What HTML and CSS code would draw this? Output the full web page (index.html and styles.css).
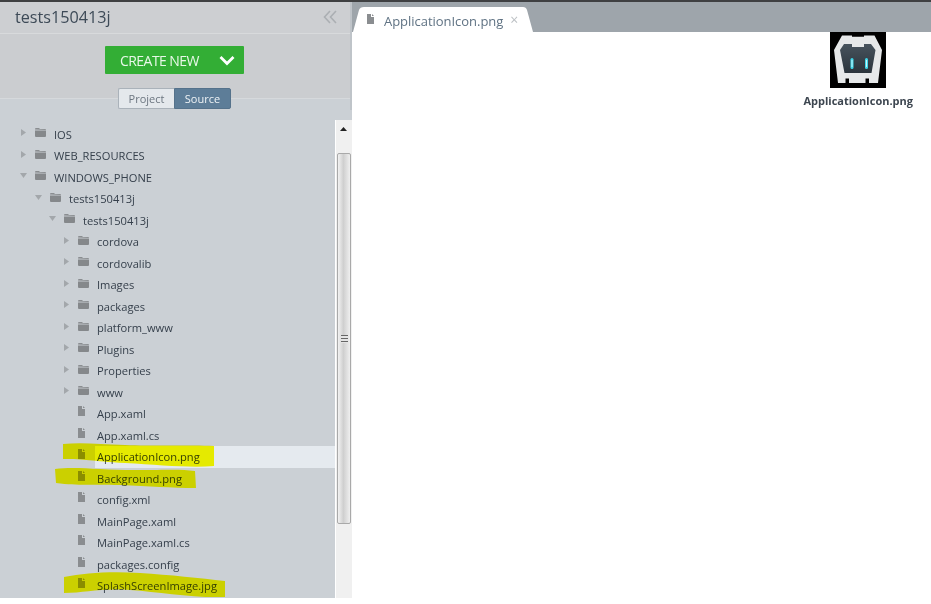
FILE: index.html
```html
<!DOCTYPE html>
<html lang="en">
<head>
<meta charset="utf-8">
<title>tests150413j</title>
<link rel="stylesheet" href="styles.css">
</head>
<body>
<svg class="defs" width="0" height="0" aria-hidden="true">
  <symbol id="folder" viewBox="0 0 11 9"><path d="M0 1.500V1q0-1 1-1h3l1 1h5q1 0 1 1z" fill="#8a8d90"/><path d="M0 2.500h11V8q0 1-1 1H1q-1 0-1-1z" fill="#85888b"/></symbol>
  <symbol id="file" viewBox="0 0 7 10"><path d="M0 0h4v3h3v7H0zM5 0l2 2H5z" fill="#8a8d90"/></symbol>
  <symbol id="closed" viewBox="0 0 5 7"><path d="M0 0l5 3.500L0 7z" fill="#a3a7ab"/></symbol>
  <symbol id="open" viewBox="0 0 7 5"><path d="M0 0h7L3.500 5z" fill="#a3a7ab"/></symbol>
  <linearGradient id="face" x1="0" y1="0" x2="0" y2="1"><stop offset="0" stop-color="#47535d"/><stop offset="1" stop-color="#2b343c"/></linearGradient>
</svg>
<div class="app">
  <div class="topline"></div>
  <div class="body">
    <aside class="sidebar">
      <header class="title-bar">
        <h1 class="title">tests150413j</h1>
        <svg class="collapse" width="14" height="14" viewBox="0 0 14 14"><path d="M7 1L1.500 7 7 13M13 1L7.500 7 13 13" fill="none" stroke="#abafb3" stroke-width="1.600"/></svg>
      </header>
      <section class="actions">
        <button class="create"><span class="create-label">CREATE NEW</span><svg class="create-chevron" width="16" height="11" viewBox="0 0 16 11"><path d="M1.500 2l6.500 6.500L14.500 2" fill="none" stroke="#fff" stroke-width="2.800"/></svg></button>
        <div class="toggle"><span class="toggle-item">Project</span><span class="toggle-item active">Source</span></div>
      </section>
      <div class="tree-wrap">
        <ul class="tree">
          <li class="row l0"><svg class="arrow"><use href="#closed"/></svg><svg class="folder"><use href="#folder"/></svg><span>IOS</span></li>
          <li class="row l0"><svg class="arrow"><use href="#closed"/></svg><svg class="folder"><use href="#folder"/></svg><span>WEB_RESOURCES</span></li>
          <li class="row l0"><svg class="arrow down"><use href="#open"/></svg><svg class="folder"><use href="#folder"/></svg><span>WINDOWS_PHONE</span></li>
          <li class="row l1"><svg class="arrow down"><use href="#open"/></svg><svg class="folder"><use href="#folder"/></svg><span>tests150413j</span></li>
          <li class="row l2"><svg class="arrow down"><use href="#open"/></svg><svg class="folder"><use href="#folder"/></svg><span>tests150413j</span></li>
          <li class="row l3"><svg class="arrow"><use href="#closed"/></svg><svg class="folder"><use href="#folder"/></svg><span>cordova</span></li>
          <li class="row l3"><svg class="arrow"><use href="#closed"/></svg><svg class="folder"><use href="#folder"/></svg><span>cordovalib</span></li>
          <li class="row l3"><svg class="arrow"><use href="#closed"/></svg><svg class="folder"><use href="#folder"/></svg><span>Images</span></li>
          <li class="row l3"><svg class="arrow"><use href="#closed"/></svg><svg class="folder"><use href="#folder"/></svg><span>packages</span></li>
          <li class="row l3"><svg class="arrow"><use href="#closed"/></svg><svg class="folder"><use href="#folder"/></svg><span>platform_www</span></li>
          <li class="row l3"><svg class="arrow"><use href="#closed"/></svg><svg class="folder"><use href="#folder"/></svg><span>Plugins</span></li>
          <li class="row l3"><svg class="arrow"><use href="#closed"/></svg><svg class="folder"><use href="#folder"/></svg><span>Properties</span></li>
          <li class="row l3"><svg class="arrow"><use href="#closed"/></svg><svg class="folder"><use href="#folder"/></svg><span>www</span></li>
          <li class="row l3 leaf"><svg class="file"><use href="#file"/></svg><span>App.xaml</span></li>
          <li class="row l3 leaf"><svg class="file"><use href="#file"/></svg><span>App.xaml.cs</span></li>
          <li class="row l3 leaf selected"><svg class="file"><use href="#file"/></svg><span>ApplicationIcon.png</span></li>
          <li class="row l3 leaf"><svg class="file"><use href="#file"/></svg><span>Background.png</span></li>
          <li class="row l3 leaf"><svg class="file"><use href="#file"/></svg><span>config.xml</span></li>
          <li class="row l3 leaf"><svg class="file"><use href="#file"/></svg><span>MainPage.xaml</span></li>
          <li class="row l3 leaf"><svg class="file"><use href="#file"/></svg><span>MainPage.xaml.cs</span></li>
          <li class="row l3 leaf"><svg class="file"><use href="#file"/></svg><span>packages.config</span></li>
          <li class="row l3 leaf"><svg class="file"><use href="#file"/></svg><span>SplashScreenImage.jpg</span></li>
        </ul>
        <div class="scrollbar">
          <div class="scroll-btn"><svg width="7" height="4" viewBox="0 0 7 4"><path d="M3.500 0L7 4H0z" fill="#222"/></svg></div>
          <div class="thumb"><div class="grip"></div></div>
          <div class="scroll-rest"></div>
        </div>
      </div>
    </aside>
    <main class="main">
      <div class="tabs">
        <div class="tab">
          <svg class="tab-file"><use href="#file"/></svg>
          <span class="tab-label">ApplicationIcon.png</span>
          <span class="tab-close">×</span>
        </div>
      </div>
      <div class="viewer">
        <figure class="preview">
          <svg class="app-icon" width="56" height="56" viewBox="0 0 56 56">
            <rect width="56" height="56" fill="#000"/>
            <path d="M12 3.500H22V4.700H34V3.500H44.500L52 18 48 51H39V46.500H35.500V51H19V46.500H15.500V51H8L4 18Z" fill="#e6e8e9"/>
            <path d="M14 12H22V15H34V12H41L45.500 18 41.500 41H14.500L10 18Z" fill="url(#face)"/>
            <rect x="20.500" y="26" width="3" height="11" rx="1.500" fill="#3fd7ea"/>
            <rect x="35" y="26" width="3" height="11" rx="1.500" fill="#3fd7ea"/>
            <rect x="21.500" y="28" width="1" height="7" fill="#c9f6fb"/>
            <rect x="36" y="28" width="1" height="7" fill="#c9f6fb"/>
          </svg>
          <figcaption class="caption">ApplicationIcon.png</figcaption>
        </figure>
      </div>
    </main>
  </div>
</div>
<svg class="marker" width="350" height="604" viewBox="0 0 350 604" aria-hidden="true">
  <path d="M63 444C80 442 100 444 125 445S190 445 214 446L214 466C190 468 160 465 125 463S85 459 63 459Z" fill="#ff0"/>
  <path d="M55 469C75 466 100 470 135 470S180 469 195 471L196 488C170 488 150 486 120 485S80 486 56 483Z" fill="#ff0"/>
  <path d="M64 577C85 573 110 571 140 573S200 578 225 581L225 597C190 598 160 592 130 590S85 593 64 593Z" fill="#ff0"/>
</svg>
</body>
</html>
```

FILE: styles.css
```css
* { box-sizing: border-box; }
html, body { margin: 0; padding: 0; background: #fff; overflow: hidden; }
body { font-family: "Open Sans", sans-serif; height: 604px; position: relative; }
.defs { position: absolute; }
.app { height: 598px; display: flex; flex-direction: column; overflow: hidden; }
.topline { height: 2px; background: #3f4042; flex: none; }
.body { flex: 1; display: flex; min-height: 0; }

.sidebar { width: 352px; flex: none; display: flex; flex-direction: column; background: #bfc4c9; min-height: 0; }
.title-bar { height: 32px; flex: none; display: flex; align-items: center; justify-content: space-between; padding: 0 13px 2px 15px; background: #cdcfd2; border-bottom: 1px solid #d8dadc; margin-right: 2px; }
.title { margin: 0; font-size: 16.200px; font-weight: 400; color: #3d4a57; }
.collapse { display: block; }
.actions { height: 76px; flex: none; display: flex; flex-direction: column; align-items: center; gap: 14px; padding-top: 12px; background: linear-gradient(#cbcdd0 64px, #d6d9dc 64px, #d6d9dc 65px, #cbd0d5 65px); margin-right: 2px; }
.create { width: 139px; height: 28px; flex: none; margin-right: 1px; padding: 0 9px 0 15px; display: flex; align-items: center; justify-content: space-between; border: 0; border-radius: 1px; background: #33ae35; color: #e8f8e8; font: 400 14px "Open Sans", sans-serif; letter-spacing: -.55px; }
.toggle { display: flex; height: 21px; flex: none; margin-right: 1px; font-size: 11px; }
.toggle-item { width: 56px; display: flex; align-items: center; justify-content: center; background: #e4e8ec; color: #6c7680; border: 1px solid #aab2ba; border-right: 0; border-radius: 2px 0 0 2px; }
.toggle-item.active { width: 57px; background: #5d7d98; color: #eef2f5; border: 1px solid #55728b; border-radius: 0 2px 2px 0; }

.tree-wrap { flex: 1; min-height: 0; display: flex; padding-top: 10px; background: linear-gradient(#cbd0d5 10px, transparent 10px); }
.tree { flex: 1; min-width: 0; margin: 0; padding: 3.500px 0 0; list-style: none; overflow: hidden; background: #cbd0d5; }
.row { height: 21.500px; display: flex; align-items: center; font-size: 11.150px; color: #36404c; white-space: nowrap; }
.arrow, .folder { flex: none; margin-bottom: 3px; }
.file { flex: none; margin-bottom: 5px; }
.arrow { width: 5px; height: 7px; }
.arrow.down { width: 7px; height: 5px; margin-left: -1px; margin-right: -1px; }
.folder { width: 11px; height: 9px; margin-left: 9px; margin-right: 8px; }
.file { width: 7px; height: 10px; margin-right: 12px; }
.l0 { padding-left: 21px; }
.l1 { padding-left: 36px; }
.l2 { padding-left: 50px; }
.l3 { padding-left: 64px; }
.leaf { padding-left: 78px; }
.selected { background: linear-gradient(90deg, transparent 95px, #e5eaef 95px); }

.scrollbar { width: 17px; flex: none; display: flex; flex-direction: column; background: #f0f0f0; border-left: 1px solid #fff; }
.scroll-btn { height: 33px; flex: none; display: flex; justify-content: center; padding-top: 7px; padding-right: 1px; background: #f0f0f0; }
.thumb { height: 371px; flex: none; margin: 0 1px; display: flex; align-items: center; justify-content: center; border: 1px solid #a9a9a9; border-radius: 2px; background: linear-gradient(90deg, #f2f2f2, #cfcfcf 45%, #d8d8d8 60%, #efefef); }
.grip { width: 7px; height: 8px; background: repeating-linear-gradient(#666 0 1px, #e4e4e4 1px 3px); }
.scroll-rest { flex: 1; background: #f0f0f0; }

.main { flex: 1; min-width: 0; display: flex; flex-direction: column; }
.tabs { height: 30px; flex: none; background: #9ea5ab; display: flex; align-items: flex-end; padding-left: 1px; }
.tab { width: 180px; height: 25px; display: flex; align-items: center; padding: 2px 0 0 14px; background: #fff; clip-path: path("M0 25L6 3Q7 0 11 0H170Q173 0 174 3L180 25Z"); }
.tab-file { width: 7px; height: 10px; margin-right: 10px; margin-bottom: 3px; }
.tab-label { font-size: 13px; letter-spacing: -.03px; color: #5f7283; }
.tab-close { font-size: 14px; color: #bcc0c4; margin-left: 7px; line-height: 1; margin-bottom: 2px; }
.viewer { flex: 1; background: #fff; display: flex; justify-content: flex-end; padding-right: 18px; }
.preview { margin: 0; display: flex; flex-direction: column; align-items: center; }
.app-icon { display: block; }
.caption { font-size: 11px; font-weight: 700; color: #3d4650; margin-top: 5px; }

.marker { position: absolute; left: 0; top: 0; mix-blend-mode: multiply; pointer-events: none; }
```
